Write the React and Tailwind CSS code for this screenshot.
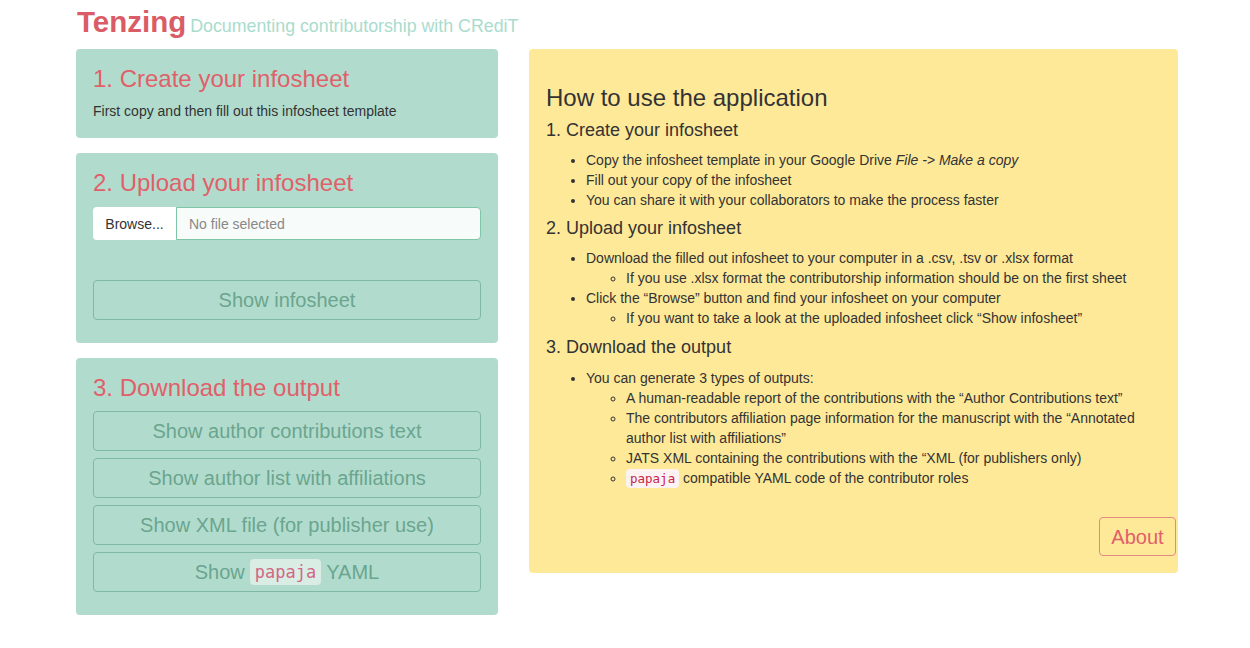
import React from "react";

const font = { fontFamily: '"Liberation Sans", Arial, sans-serif' };

function Btn({ children }) {
  return (
    <div className="h-[40px] w-full rounded-[4px] border border-[#80b9a3] flex items-center justify-center text-[20px] text-[#6ba58f]">
      {children}
    </div>
  );
}

function Code({ children, className }) {
  return (
    <code
      className={className}
      style={{ fontFamily: '"DejaVu Sans Mono", "Liberation Mono", monospace' }}
    >
      {children}
    </code>
  );
}

export default function App() {
  return (
    <div className="w-[1250px] h-[648px] bg-white text-[#333] text-[14px] leading-[20px]" style={font}>
      <div className="pl-[77px] pt-[4px] h-[49px] flex items-baseline gap-[4px]">
        <span className="text-[29.5px] leading-[36px] font-bold text-[#d95c66]">Tenzing</span>
        <span className="text-[17.8px] text-[#a9dccd]">Documenting contributorship with CRediT</span>
      </div>
      <div className="flex pl-[76px] gap-[31px] items-start">
        <div className="w-[422px] flex flex-col gap-[15px]">
          <div className="bg-[#b1dccd] rounded-[4px] px-[17px] pt-[17px] pb-[17px]">
            <div className="text-[24px] leading-[26px] text-[#e0606a]">1. Create your infosheet</div>
            <div className="mt-[9px] text-[14px] leading-[20px] text-[#333]">First copy and then fill out this infosheet template</div>
          </div>
          <div className="bg-[#b1dccd] rounded-[4px] px-[17px] pt-[17px] pb-[23px]">
            <div className="text-[24px] leading-[26px] text-[#e0606a]">2. Upload your infosheet</div>
            <div className="mt-[11px] flex h-[33px]">
              <div className="w-[83px] bg-white rounded-l-[4px] flex items-center justify-center text-[14px] text-[#333]">Browse...</div>
              <div className="flex-1 bg-[#f7fbf9] border border-[#7fc6a8] rounded-r-[4px] flex items-center pl-[12px] text-[14px] text-[#888]">No file selected</div>
            </div>
            <div className="mt-[40px]">
              <Btn>Show infosheet</Btn>
            </div>
          </div>
          <div className="bg-[#b1dccd] rounded-[4px] px-[17px] pt-[17px] pb-[23px]">
            <div className="text-[24px] leading-[26px] text-[#e0606a]">3. Download the output</div>
            <div className="mt-[10px] flex flex-col gap-[7px]">
              <Btn>Show author contributions text</Btn>
              <Btn>Show author list with affiliations</Btn>
              <Btn>Show XML file (for publisher use)</Btn>
              <Btn>
                Show
                <Code className="mx-[5px] px-[5px] py-[1px] rounded-[4px] bg-[#d9ede5] text-[#d36785] text-[17px] leading-[24px]">papaja</Code>
                YAML
              </Btn>
            </div>
          </div>
        </div>
        <div className="w-[649px] h-[524px] bg-[#fee999] rounded-[4px] pl-[17px] pr-[2px] pt-[36px] flex flex-col">
          <div className="text-[24px] leading-[26px] text-[#333]">How to use the application</div>
          <div className="mt-[9px] text-[18px] leading-[20px]">1. Create your infosheet</div>
          <ul className="mt-[10px] pl-[40px] list-disc">
            <li>Copy the infosheet template in your Google Drive <i>File -&gt; Make a copy</i></li>
            <li>Fill out your copy of the infosheet</li>
            <li>You can share it with your collaborators to make the process faster</li>
          </ul>
          <div className="mt-[8px] text-[18px] leading-[20px]">2. Upload your infosheet</div>
          <ul className="mt-[10px] pl-[40px] list-disc">
            <li>Download the filled out infosheet to your computer in a .csv, .tsv or .xlsx format
              <ul className="pl-[40px] list-[circle]">
                <li>If you use .xlsx format the contributorship information should be on the first sheet</li>
              </ul>
            </li>
            <li>Click the “Browse” button and find your infosheet on your computer
              <ul className="pl-[40px] list-[circle]">
                <li>If you want to take a look at the uploaded infosheet click “Show infosheet”</li>
              </ul>
            </li>
          </ul>
          <div className="mt-[9px] text-[18px] leading-[20px]">3. Download the output</div>
          <ul className="mt-[11px] pl-[40px] list-disc pr-[15px]">
            <li>You can generate 3 types of outputs:
              <ul className="pl-[40px] list-[circle]">
                <li>A human-readable report of the contributions with the “Author Contributions text”</li>
                <li>The contributors affiliation page information for the manuscript with the “Annotated author list with affiliations”</li>
                <li>JATS XML containing the contributions with the “XML (for publishers only)</li>
                <li>
                  <Code className="px-[4px] py-[2px] rounded-[4px] bg-[#fbf2f1] text-[#c7254e] text-[12.5px]">papaja</Code> compatible YAML code of the contributor roles
                </li>
              </ul>
            </li>
          </ul>
          <div className="flex-1" />
          <div className="flex justify-end mb-[17px]">
            <div className="w-[77px] h-[39px] rounded-[4px] border border-[#e58a82] flex items-center justify-center text-[20px] text-[#e0606a]">About</div>
          </div>
        </div>
      </div>
    </div>
  );
}
